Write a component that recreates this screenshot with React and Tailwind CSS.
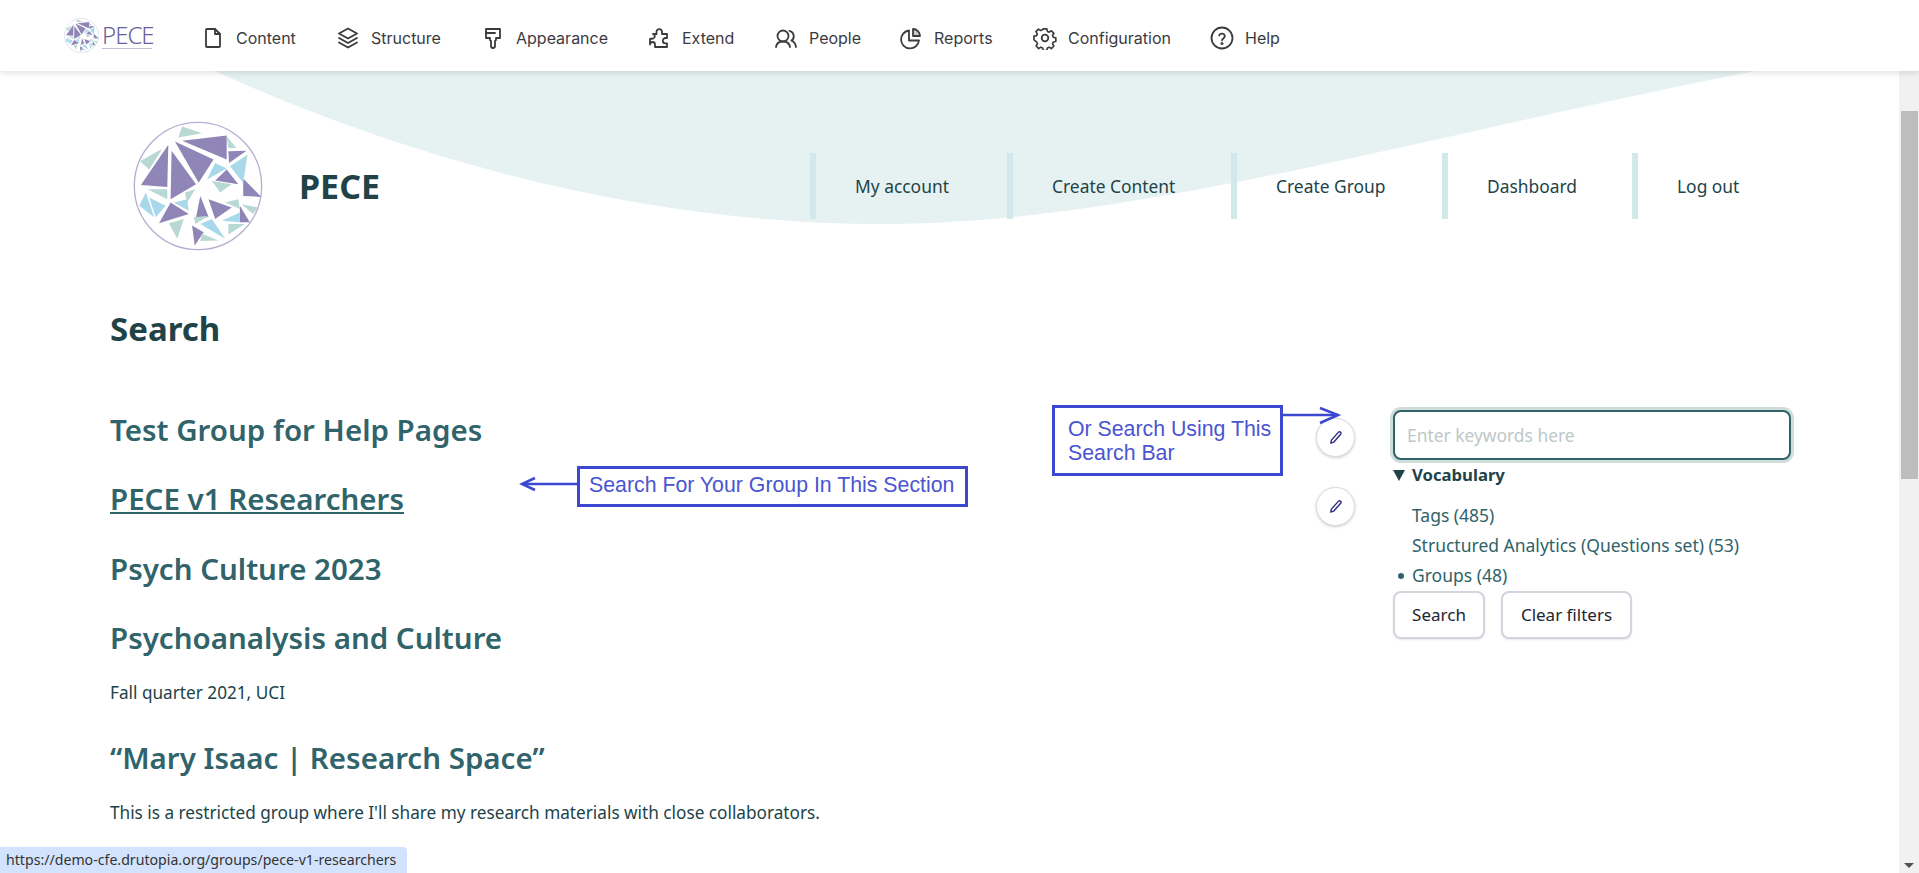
import React from 'react';

const sans = "font-['Noto_Sans','Open_Sans',sans-serif]";

const ToolIcon = ({ children }) => (
  <svg width="24" height="24" viewBox="0 0 24 24" fill="none" stroke="#3b3b3f" strokeWidth="1.800" strokeLinecap="round" strokeLinejoin="round">
    {children}
  </svg>
);

const toolbarItems = [
  { label: 'Content', w: 'w-[135px]', icon: <><path d="M6 3h8l5 5v12a1 1 0 0 1-1 1H6a1 1 0 0 1-1-1V4a1 1 0 0 1 1-1z" /><path d="M14 3v5h5" /></> },
  { label: 'Structure', w: 'w-[145px]', icon: <><path d="M12 2.500l9 5-9 5-9-5z" /><path d="M3 12l9 5 9-5" /><path d="M3 16.500l9 5 9-5" /></> },
  { label: 'Appearance', w: 'w-[166px]', icon: <><path d="M5 3h14v9h-4v2l-1 1v5a2 2 0 0 1-4 0v-5l-1-1v-2H5z" /><path d="M5 7h9" /></> },
  { label: 'Extend', w: 'w-[127px]', icon: <path d="M9.500 6.500a2.800 2.800 0 1 1 5.500 0V8h5v4h-1.500a2.700 2.700 0 0 0 0 5.400H20V21H8v-2.500a2.500 2.500 0 0 0-5 0V13l3-.5a2.300 2.300 0 0 0 0-4.500V8h3.500z" /> },
  { label: 'People', w: 'w-[125px]', icon: <><circle cx="9" cy="10" r="5.500" /><path d="M2 21c.5-3.500 3-5.500 7-5.500s6.500 2 7 5.500" /><path d="M15.500 4.800a5.500 5.500 0 0 1 2 9.800c2.500.8 4 3 4.500 6.400" /></> },
  { label: 'Reports', w: 'w-[134px]', icon: <><path d="M10 4.500a9 9 0 1 0 10 10H10z" /><path d="M14 3a7 7 0 0 1 7 7h-7z" fill="#c9c9cc" /></> },
  { label: 'Configuration', w: 'w-[177px]', icon: <><circle cx="12" cy="12" r="3.300" /><path d="M10 2h4l.6 2.800 1.900.8 2.400-1.500 2.800 2.800-1.500 2.400.8 1.900 2.800.6v4l-2.800.6-.8 1.900 1.500 2.400-2.800 2.800-2.400-1.500-1.900.8-.6 2.800h-4l-.6-2.800-1.900-.8-2.400 1.500-2.800-2.800 1.500-2.400-.8-1.900L0 14v-4l2.800-.6.8-1.900-1.500-2.400 2.800-2.800 2.400 1.500 1.900-.8z" transform="translate(1 1) scale(.917)" /></> },
  { label: 'Help', w: '', icon: <><circle cx="12" cy="12" r="10.500" /><path d="M9.200 9.500a2.900 2.900 0 0 1 5.600.8c0 2-2.800 2.400-2.800 4" /><circle cx="12" cy="17.500" r=".6" fill="#3b3b3f" /></> },
];

const facets = ['Tags (485)', 'Structured Analytics (Questions set) (53)'];
const menu = [
  { label: 'My account', w: 'w-[197px]' },
  { label: 'Create Content', w: 'w-[224px]' },
  { label: 'Create Group', w: 'w-[211px]' },
  { label: 'Dashboard', w: 'w-[190px]' },
  { label: 'Log out', w: 'w-[128px]' },
];

// stained-glass logo, triangles traced off the reference
const purple = [
  '208,160 125,282 205,288', '218,178 292,280 215,325', '228,150 345,205 300,275', '250,148 385,132 385,205',
  '390,180 445,178 392,215', '350,268 385,235 420,280', '435,262 490,318 435,315', '180,398 215,335 270,370',
  '305,315 290,390 330,378', '330,325 400,350 350,385', '425,345 455,395 425,395', '280,405 315,425 288,465',
];
const blue = [
  '325,265 350,215 385,232', '395,225 448,190 435,275', '140,305 120,345 165,380', '150,320 200,345 170,380',
  '225,335 265,325 270,360', '305,400 340,385 380,445', '370,390 425,365 425,395',
];
const green = [
  '250,105 310,125 238,138', '190,172 122,210 150,235', '340,270 400,280 365,305', '145,295 205,295 205,325',
  '258,305 290,295 265,335', '210,398 255,385 235,445', '285,380 330,375 290,400', '380,335 420,325 425,355',
  '430,340 480,350 465,370', '390,400 440,400 390,432', '310,430 360,450 305,452', '385,135 415,170 390,170',
];

const Logo = ({ size }) => (
  <svg width={size} height={size} viewBox="103 88 390 394">
    <circle cx="298" cy="285" r="193" fill="#fff" stroke="#b5aed0" strokeWidth="4" />
    {purple.map(p => <polygon key={p} points={p} fill="#8f85b6" />)}
    {blue.map(p => <polygon key={p} points={p} fill="#a9d8ea" />)}
    {green.map(p => <polygon key={p} points={p} fill="#b8d9d3" />)}
  </svg>
);

const Pencil = () => (
  <span className="w-[39px] h-[39px] rounded-full bg-white border border-[#dcdce2] shadow-[0_1px_3px_rgba(0,0,0,0.2)] flex items-center justify-center">
    <svg width="15" height="15" viewBox="0 0 16 16" fill="none" stroke="#2d2a80" strokeWidth="1.500" strokeLinejoin="round">
      <path d="M11 2.500a1.500 1.500 0 0 1 2.500 2L6 13l-3 1 .6-3.200z" />
    </svg>
  </span>
);

const Note = ({ className, children }) => (
  <div className={`absolute border-[3px] border-[#3c48cf] bg-white text-[#4a55d0] text-[21.300px] leading-[24px] font-['Liberation_Sans',sans-serif] ${className}`}>
    {children}
  </div>
);

const Button = ({ children, className }) => (
  <button className={`h-[48px] rounded-[8px] bg-white border-2 border-[#d3d4de] shadow-[0_1px_2px_rgba(0,0,0,0.1)] text-[17px] text-[#222330] ${className}`}>
    {children}
  </button>
);

export default function App() {
  return (
    <div className={`relative h-[873px] overflow-hidden bg-white ${sans}`}>
      {/* Admin toolbar */}
      <header className="relative z-10 h-[71px] bg-white shadow-[0_2px_6px_rgba(0,0,0,0.12)] flex items-center pl-[64px] pr-[20px] pt-[5px]">
        <div className="w-[137px] -mt-[6px] flex items-center">
          <Logo size={35} />
          <div className="ml-[3px] flex flex-col text-[#6a5f9e]">
            <span className="text-[24px] leading-[26px] font-light tracking-[-1px]">PECE</span>
            <span className="w-[50px] h-[1px] bg-[#c3bed8]" />
          </div>
        </div>
        <nav className="flex items-center font-['Inter',sans-serif] text-[16px] text-[#3b3b3f]">
          {toolbarItems.map(item => (
            <a key={item.label} className={`flex items-center gap-[11px] ${item.w}`}>
              <ToolIcon>{item.icon}</ToolIcon>
              <span>{item.label}</span>
            </a>
          ))}
        </nav>
      </header>

      {/* Site header with the wave behind it */}
      <svg className="absolute left-0 top-[71px]" width="1899" height="160" viewBox="0 0 1899 160">
        <path d="M215 0C400 85 640 153 880 153C1130 153 1400 70 1755 0z" fill="#e6f2f2" />
      </svg>
      <div className="relative pl-[133px] pr-[159px] pt-[33px] pb-[36px] flex items-center h-[164px] box-content">
        <Logo size={130} />
        <span className="ml-[36px] text-[34px] font-bold text-[#214348]">PECE</span>
        <nav className="ml-auto flex items-center text-[17.400px] text-[#214348]">
          {menu.map(m => (
            <a key={m.label} className={`h-[66px] border-l-[6px] border-[#d3e8ea] pl-[39px] flex items-center ${m.w}`}>
              {m.label}
            </a>
          ))}
        </nav>
      </div>

      <main className="relative flex pl-[110px]">
        <div className="w-[1283px]">
          <h1 className="text-[33px] leading-[48px] font-bold text-[#214348] mt-[1px]">Search</h1>
          <div className="mt-[57px] flex flex-col text-[#30636a]">
            <h2 className="text-[29.500px] leading-[40px] font-semibold">Test Group for Help Pages</h2>
            <h2 className="text-[29.500px] leading-[40px] font-semibold underline mt-[29px]">PECE v1 Researchers</h2>
            <h2 className="text-[29.500px] leading-[40px] font-semibold mt-[30px]">Psych Culture 2023</h2>
            <h2 className="text-[29.500px] leading-[40px] font-semibold mt-[29px]">Psychoanalysis and Culture</h2>
            <p className="text-[17.200px] leading-[24px] text-[#214348] mt-[23px]">Fall quarter 2021, UCI</p>
            <h2 className="text-[29.500px] leading-[40px] font-semibold mt-[33px]">“Mary Isaac | Research Space”</h2>
            <p className="text-[17.200px] leading-[24px] text-[#214348] mt-[23px]">This is a restricted group where I'll share my research materials with close collaborators.</p>
          </div>
        </div>

        {/* Search sidebar */}
        <aside className="w-[398px] mt-[106px]">
          <input
            placeholder="Enter keywords here"
            className="w-full h-[50px] px-[12px] rounded-[8px] bg-white border-2 border-[#30636a] ring-[3px] ring-[#cfdedd] text-[17.400px] placeholder:text-[#bcc8c8] outline-none"
          />
          <div className="mt-[3px] flex items-center text-[16.700px] leading-[24px] font-bold text-[#214348]">
            <span className="w-0 h-0 mr-[7px] border-x-[6px] border-x-transparent border-t-[11px] border-t-[#214348]" />
            <span>Vocabulary</span>
          </div>
          <ul className="mt-[13px] pl-[19px] text-[17.500px] leading-[30px] text-[#30636a]">
            {facets.map(f => <li key={f}>{f}</li>)}
            <li className="relative">
              <span className="absolute -left-[14px] top-[13px] w-[6px] h-[6px] rounded-full bg-[#30636a]" />
              Groups (48)
            </li>
          </ul>
          <div className="flex gap-[16px] mt-[1px]">
            <Button className="w-[92px]">Search</Button>
            <Button className="w-[131px]">Clear filters</Button>
          </div>
        </aside>
      </main>

      {/* Contextual edit buttons */}
      <div className="absolute left-[1316px] top-[418px] flex flex-col gap-[30px]">
        <Pencil />
        <Pencil />
      </div>

      {/* Screenshot annotations */}
      <Note className="left-[577px] top-[466px] w-[391px] h-[41px] pl-[9px] leading-[33px] whitespace-nowrap">Search For Your Group In This Section</Note>
      <svg className="absolute left-[518px] top-[476px]" width="60" height="20" viewBox="0 0 60 20" fill="none" stroke="#3c48cf" strokeWidth="2.500">
        <path d="M60 8H4" />
        <path d="M17 2L4 8l13 6" />
      </svg>
      <Note className="left-[1052px] top-[405px] w-[231px] h-[71px] pl-[13px] pt-[9px]">Or Search Using This<br />Search Bar</Note>
      <svg className="absolute left-[1282px] top-[406px]" width="60" height="22" viewBox="0 0 60 22" fill="none" stroke="#3c48cf" strokeWidth="2.500">
        <path d="M0 9h56" />
        <path d="M38 2l18 7-18 8" />
      </svg>

      {/* Link preview in the status bubble */}
      <div className="absolute left-0 bottom-0 h-[26px] w-[407px] bg-[#d3e3fd] rounded-tr-[4px] pl-[6px] text-[14.150px] leading-[26px] text-[#333]">
        https://demo-cfe.drutopia.org/groups/pece-v1-researchers
      </div>

      {/* Scrollbar */}
      <div className="absolute right-0 top-[3px] bottom-0 w-[20px] bg-[#f1f1f1] flex flex-col items-center justify-between py-[5px]">
        <span className="w-0 h-0 border-x-[5px] border-x-transparent border-b-[5px] border-b-[#505050]" />
        <span className="w-0 h-0 border-x-[5px] border-x-transparent border-t-[5px] border-t-[#505050]" />
      </div>
      <div className="absolute right-[1px] top-[111px] h-[368px] w-[17px] bg-[#bdbdbd]" />
    </div>
  );
}
